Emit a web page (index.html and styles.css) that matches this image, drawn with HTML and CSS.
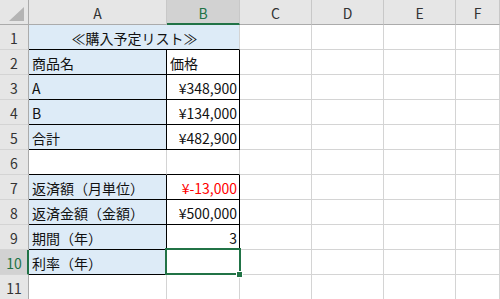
FILE: index.html
```html
<!DOCTYPE html>
<html lang="ja">
<head>
<meta charset="utf-8">
<title>購入予定リスト</title>
<link rel="stylesheet" href="styles.css">
</head>
<body>
<div class="sheet">
  <!-- column headers -->
  <div class="corner">
    <svg width="28" height="24" viewBox="0 0 28 24"><polygon points="9,21 24,21 24,7" fill="#b4b4b4"/></svg>
  </div>
  <div class="ch">A</div>
  <div class="ch sel">B</div>
  <div class="ch">C</div>
  <div class="ch">D</div>
  <div class="ch">E</div>
  <div class="ch">F</div>

  <!-- 1 -->
  <div class="rh">1</div>
  <div class="c fill ctr bb span2">≪購入予定リスト≫</div>
  <div class="c"></div><div class="c"></div><div class="c"></div><div class="c"></div>

  <!-- 2 -->
  <div class="rh">2</div>
  <div class="c fill bb br">商品名</div>
  <div class="c bb br">価格</div>
  <div class="c"></div><div class="c"></div><div class="c"></div><div class="c"></div>

  <!-- 3 -->
  <div class="rh">3</div>
  <div class="c fill bb br">A</div>
  <div class="c num bb br">¥348,900</div>
  <div class="c"></div><div class="c"></div><div class="c"></div><div class="c"></div>

  <!-- 4 -->
  <div class="rh">4</div>
  <div class="c fill bb br">B</div>
  <div class="c num bb br">¥134,000</div>
  <div class="c"></div><div class="c"></div><div class="c"></div><div class="c"></div>

  <!-- 5 -->
  <div class="rh">5</div>
  <div class="c fill bb br">合計</div>
  <div class="c num bb br">¥482,900</div>
  <div class="c"></div><div class="c"></div><div class="c"></div><div class="c"></div>

  <!-- 6 -->
  <div class="rh">6</div>
  <div class="c bb"></div>
  <div class="c bb"></div>
  <div class="c"></div><div class="c"></div><div class="c"></div><div class="c"></div>

  <!-- 7 -->
  <div class="rh">7</div>
  <div class="c fill bb br">返済額（月単位）</div>
  <div class="c num neg bb br">¥-13,000</div>
  <div class="c"></div><div class="c"></div><div class="c"></div><div class="c"></div>

  <!-- 8 -->
  <div class="rh">8</div>
  <div class="c fill bb br">返済金額（金額）</div>
  <div class="c num bb br">¥500,000</div>
  <div class="c"></div><div class="c"></div><div class="c"></div><div class="c"></div>

  <!-- 9 -->
  <div class="rh">9</div>
  <div class="c fill bb br">期間（年）</div>
  <div class="c num bb br">3</div>
  <div class="c"></div><div class="c"></div><div class="c"></div><div class="c"></div>

  <!-- 10 -->
  <div class="rh rsel">10</div>
  <div class="c fill bb br">利率（年）</div>
  <div class="c num bb br active"><span class="cursor"></span><span class="handle"></span></div>
  <div class="c"></div><div class="c"></div><div class="c"></div><div class="c"></div>

  <!-- 11 -->
  <div class="rh">11</div>
  <div class="c"></div><div class="c"></div><div class="c"></div><div class="c"></div><div class="c"></div><div class="c"></div>
</div>
</body>
</html>
```

FILE: styles.css
```css
* {
  box-sizing: border-box;
}

html, body {
  margin: 0;
  background: #ffffff;
}

body {
  font-family: "Noto Sans CJK JP", "Noto Sans", sans-serif;
  font-size: 14px;
  color: #111111;
  overflow: hidden;
}

.sheet {
  display: grid;
  grid-template-columns: 29px 138px 73px 72px 72px 72px 1fr;
  grid-auto-rows: 25px;
  width: 500px;
}

/* header corner with the select-all triangle */
.corner {
  background: #e6e6e6;
  border-right: 1px solid #ababab;
  border-bottom: 1px solid #ababab;
}

.corner svg {
  display: block;
}

/* column headers */
.ch {
  background: #e6e6e6;
  border-right: 1px solid #c8c8c8;
  border-bottom: 1px solid #ababab;
  display: flex;
  align-items: center;
  justify-content: center;
  color: #333333;
  line-height: 1;
  padding-top: 1px;
}

.ch.sel {
  background: #d2d2d2;
  color: #217346;
  border-bottom: 2px solid #217346;
  padding-top: 2px;
}

/* row headers */
.rh {
  background: #e6e6e6;
  border-right: 1px solid #ababab;
  border-bottom: 1px solid #d4d4d4;
  display: flex;
  align-items: center;
  justify-content: center;
  color: #333333;
  line-height: 1;
  padding-top: 1px;
}

.rh.rsel {
  background: #d2d2d2;
  color: #217346;
  border-right: 2px solid #217346;
  padding-left: 1px;
}

/* cells */
.c {
  border-right: 1px solid #d4d4d4;
  border-bottom: 1px solid #d4d4d4;
  display: flex;
  align-items: center;
  padding: 1px 2px 0 3px;
  white-space: nowrap;
  line-height: 1;
  position: relative;
}

.span2 {
  grid-column: span 2;
}

.fill {
  background: #ddebf7;
}

.ctr {
  justify-content: center;
}

.num {
  justify-content: flex-end;
}

.neg {
  color: #ff0000;
}

.bb {
  border-bottom-color: #000000;
}

.br {
  border-right-color: #000000;
}

/* active cell outline and fill handle */
.cursor {
  position: absolute;
  left: -2px;
  top: -2px;
  width: 76px;
  height: 27px;
  border: 2px solid #217346;
  z-index: 2;
}

.handle {
  position: absolute;
  left: 69px;
  top: 21px;
  width: 7px;
  height: 7px;
  background: #217346;
  border: 1px solid #ffffff;
  z-index: 3;
}
```
